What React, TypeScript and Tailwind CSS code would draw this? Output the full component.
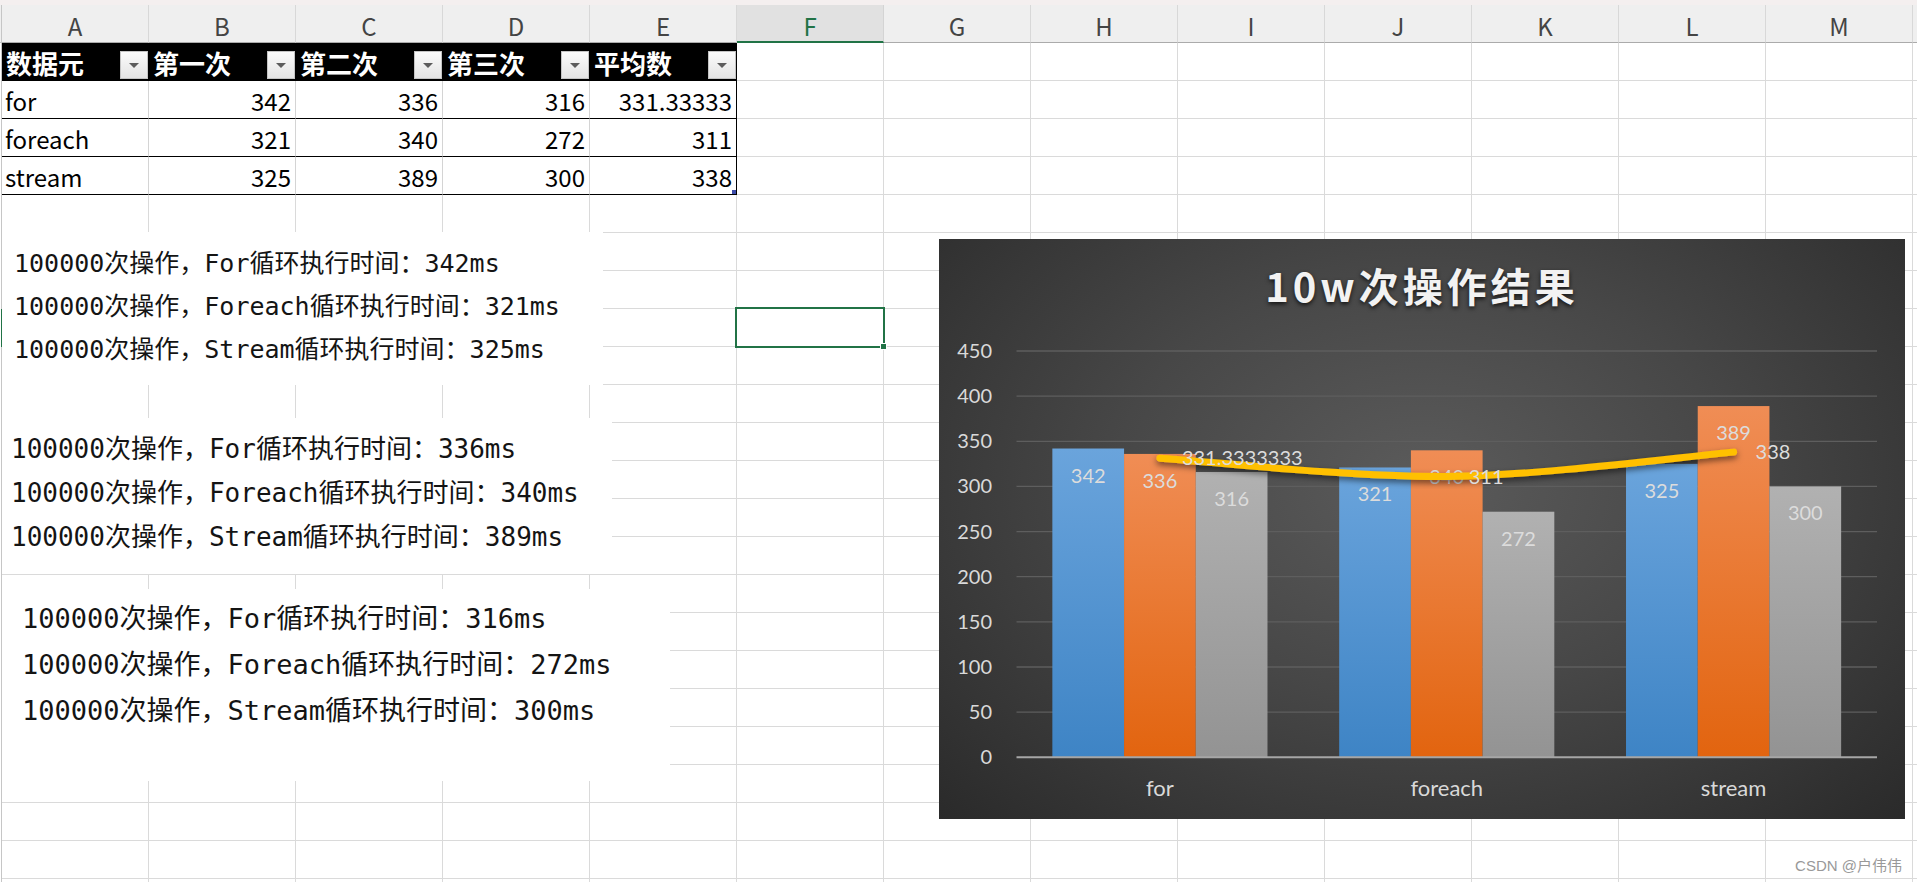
import React from "react";

const COLS = ["A", "B", "C", "D", "E", "F", "G", "H", "I", "J", "K", "L", "M"];
const ROW_COUNT = 23;
const SELECTED_COL = 5;
const SELECTED_ROW = 7;

const HEADERS = ["数据元", "第一次", "第二次", "第三次", "平均数"];
const TABLE = [
  ["for", "342", "336", "316", "331.33333"],
  ["foreach", "321", "340", "272", "311"],
  ["stream", "325", "389", "300", "338"],
];

const LOOPS = ["For", "Foreach", "Stream"];
const RUNS = [
  [342, 321, 325],
  [336, 340, 389],
  [316, 272, 300],
];

const logLine = (loop: string, ms: number) =>
  `100000次操作，${loop}循环执行时间：${ms}ms`;

function FilterButton() {
  return (
    <span className="mb-[1px] flex h-[28px] w-[28px] shrink-0 items-center justify-center self-end border border-[#c4c4c4] bg-linear-to-b from-[#fbfbfb] to-[#e4e4e4]">
      <span className="h-0 w-0 border-x-[5px] border-t-[5px] border-x-transparent border-t-[#5c5c5c]" />
    </span>
  );
}

function SheetCell({ row, col }: { row: number; col: number }) {
  const inTable = col < 5 && row < 4;

  if (inTable && row === 0) {
    return (
      <div className="flex h-full w-[147px] shrink-0 items-center justify-between border-r border-b border-black bg-black pl-[4px] text-[26px] font-bold text-white">
        <span className="pt-[3px] leading-none">{HEADERS[col]}</span>
        <FilterButton />
      </div>
    );
  }

  if (inTable) {
    const value = TABLE[row - 1][col];
    return (
      <div
        className={`relative flex h-full w-[147px] shrink-0 items-center border-b border-b-black pt-[3px] pl-[3px] pr-[4px] text-[24px] text-black ${
          col === 4 ? "border-r border-r-black" : "border-r border-r-[#d4d4d4]"
        } ${col === 0 ? "justify-start" : "justify-end"}`}
      >
        <span className="leading-none">{value}</span>
        {row === 3 && col === 4 && (
          <span className="absolute right-0 bottom-0 h-[4px] w-[4px] bg-[#3b4ba8]" />
        )}
      </div>
    );
  }

  return <div className="h-full w-[147px] shrink-0 border-r border-b border-[#dadada]" />;
}

// ---- chart ----
const CATS = ["for", "foreach", "stream"];
const SERIES = [
  { values: [342, 321, 325], fill: "url(#gBlue)" },
  { values: [336, 340, 389], fill: "url(#gOrange)" },
  { values: [316, 272, 300], fill: "url(#gGray)" },
];
const AVG = [331.3333333, 311, 338];
const AVG_LABELS = ["331.3333333", "311", "338"];

const PLOT_L = 77.5;
const PLOT_R = 938;
const Y0 = 518.3;
const K = 406.3 / 450;
const CAT_W = (PLOT_R - PLOT_L) / 3;
const BAR_W = CAT_W / 4;
const yOf = (v: number) => Y0 - v * K;
const catCenter = (i: number) => PLOT_L + CAT_W * (i + 0.5);

function smoothPath(pts: [number, number][]) {
  let d = `M${pts[0][0]},${pts[0][1]}`;
  for (let i = 0; i < pts.length - 1; i++) {
    const p0 = pts[i - 1] ?? pts[i];
    const p1 = pts[i];
    const p2 = pts[i + 1];
    const p3 = pts[i + 2] ?? p2;
    const c1x = p1[0] + (p2[0] - p0[0]) / 6;
    const c1y = p1[1] + (p2[1] - p0[1]) / 6;
    const c2x = p2[0] - (p3[0] - p1[0]) / 6;
    const c2y = p2[1] - (p3[1] - p1[1]) / 6;
    d += ` C${c1x},${c1y} ${c2x},${c2y} ${p2[0]},${p2[1]}`;
  }
  return d;
}

function Chart() {
  const linePts = AVG.map((v, i) => [catCenter(i), yOf(v)] as [number, number]);

  return (
    <div className="absolute top-[239px] left-[939px] flex h-[580px] w-[966px] flex-col bg-[radial-gradient(ellipse_at_50%_42%,#5b5b5b_0%,#474747_45%,#2a2a2a_100%)]">
      <div className="h-[96px] shrink-0 pt-[26px] text-center font-['Noto_Sans_CJK_SC',sans-serif] text-[40px] leading-none font-bold tracking-[4px] text-[#f2f2f2] [text-shadow:0_2px_4px_rgba(0,0,0,0.75)]">
        10w次操作结果
      </div>
      <svg
        width={966}
        height={484}
        viewBox="0 96 966 484"
        className="font-['Lato','Open_Sans',sans-serif]"
      >
        <defs>
          <linearGradient id="gBlue" x1="0" y1="0" x2="0" y2="1">
            <stop offset="0" stopColor="#6aa4dc" />
            <stop offset="1" stopColor="#3e84c5" />
          </linearGradient>
          <linearGradient id="gOrange" x1="0" y1="0" x2="0" y2="1">
            <stop offset="0" stopColor="#f08d55" />
            <stop offset="1" stopColor="#e2640f" />
          </linearGradient>
          <linearGradient id="gGray" x1="0" y1="0" x2="0" y2="1">
            <stop offset="0" stopColor="#b1b1b1" />
            <stop offset="1" stopColor="#939393" />
          </linearGradient>
          <filter id="lineShadow" x="-10%" y="-50%" width="120%" height="200%">
            <feDropShadow dx="0" dy="3" stdDeviation="3" floodColor="#000" floodOpacity="0.55" />
          </filter>
        </defs>

        {/* gridlines */}
        {Array.from({ length: 9 }, (_, i) => (i + 1) * 50).map((v) => (
          <line
            key={v}
            x1={PLOT_L}
            x2={PLOT_R}
            y1={yOf(v)}
            y2={yOf(v)}
            stroke="#5e5e5e"
            strokeWidth={1.3}
          />
        ))}

        {/* y axis labels */}
        {Array.from({ length: 10 }, (_, i) => i * 50).map((v) => (
          <text key={v} x={53} y={yOf(v) + 7} fontSize={20} fill="#d9d9d9" textAnchor="end">
            {v}
          </text>
        ))}

        {/* bars */}
        {SERIES.map((s, si) =>
          s.values.map((v, ci) => {
            const x = PLOT_L + ci * CAT_W + BAR_W / 2 + si * BAR_W;
            return (
              <rect key={`${si}-${ci}`} x={x} y={yOf(v)} width={BAR_W} height={Y0 - yOf(v)} fill={s.fill} />
            );
          }),
        )}

        <line x1={PLOT_L} x2={PLOT_R} y1={Y0} y2={Y0} stroke="#a6a6a6" strokeWidth={2} />

        {/* bar labels */}
        {SERIES.map((s, si) =>
          s.values.map((v, ci) => {
            const x = PLOT_L + ci * CAT_W + BAR_W / 2 + si * BAR_W + BAR_W / 2;
            return (
              <text key={`l${si}-${ci}`} x={x} y={yOf(v) + 34} fontSize={20} fill="#dcdcdc" textAnchor="middle">
                {v}
              </text>
            );
          }),
        )}

        {/* average line */}
        <path
          d={smoothPath(linePts)}
          fill="none"
          stroke="#ffc000"
          strokeWidth={7}
          strokeLinecap="round"
          filter="url(#lineShadow)"
        />
        {linePts.map(([x, y], i) => (
          <text key={`a${i}`} x={x + 22} y={y + 7} fontSize={20} fill="#dcdcdc">
            {AVG_LABELS[i]}
          </text>
        ))}

        {/* categories */}
        {CATS.map((c, i) => (
          <text key={c} x={catCenter(i)} y={557} fontSize={22} fill="#d9d9d9" textAnchor="middle">
            {c}
          </text>
        ))}
      </svg>
    </div>
  );
}

export default function App() {
  return (
    <div className="relative h-[882px] w-[1917px] overflow-hidden bg-white font-['Noto_Sans_CJK_SC',sans-serif]">
      {/* top strip */}
      <div className="h-[5px] bg-[#f4efef]" />

      {/* column headers */}
      <div className="flex h-[38px] bg-[#efefef]">
        <div className="h-full w-[2px] shrink-0 border-r border-b border-[#c6c6c6]" />
        {COLS.map((c, i) => (
          <div
            key={c}
            className={`flex h-full w-[147px] shrink-0 items-center justify-center border-r pt-[5px] text-[24px] leading-none ${
              i === SELECTED_COL
                ? "border-b-2 border-r-[#d4d4d4] border-b-[#217346] bg-[#e1e1e1] text-[#217346]"
                : "border-b border-r-[#d8d8d8] border-b-[#ababab] text-[#444]"
            }`}
          >
            {c}
          </div>
        ))}
        <div className="h-full flex-1 border-b border-[#ababab]" />
      </div>

      {/* grid */}
      {Array.from({ length: ROW_COUNT }, (_, r) => (
        <div key={r} className="flex h-[38px]">
          <div
            className={`h-full w-[2px] shrink-0 border-r ${
              r === SELECTED_ROW ? "border-r-[#217346]" : "border-r-[#c6c6c6]"
            }`}
          />
          {COLS.map((c, ci) => (
            <SheetCell key={c} row={r} col={ci} />
          ))}
          <div className="h-full flex-1 border-b border-[#dadada]" />
        </div>
      ))}

      {/* pasted console screenshots */}
      <div className="absolute top-[232px] left-[2px] h-[153px] w-[601px] bg-white pt-[10px] pl-[12px] font-['DejaVu_Sans_Mono','Noto_Sans_CJK_SC',monospace] text-[25px] text-[#141414]">
        {LOOPS.map((l, i) => (
          <div key={l} className="h-[43px] leading-[43px] whitespace-nowrap">
            {logLine(l, RUNS[0][i])}
          </div>
        ))}
      </div>
      <div className="absolute top-[418px] left-[2px] h-[156px] w-[610px] bg-white pt-[9px] pl-[9px] font-['DejaVu_Sans_Mono','Noto_Sans_CJK_SC',monospace] text-[26px] text-[#141414]">
        {LOOPS.map((l, i) => (
          <div key={l} className="h-[44px] leading-[44px] whitespace-nowrap">
            {logLine(l, RUNS[1][i])}
          </div>
        ))}
      </div>
      <div className="absolute top-[589px] left-[2px] h-[192px] w-[668px] bg-white pt-[7px] pl-[20px] font-['DejaVu_Sans_Mono','Noto_Sans_CJK_SC',monospace] text-[27px] text-[#141414]">
        {LOOPS.map((l, i) => (
          <div key={l} className="h-[46px] leading-[46px] whitespace-nowrap">
            {logLine(l, RUNS[2][i])}
          </div>
        ))}
      </div>

      {/* selected cell F8 */}
      <div className="absolute top-[307px] left-[735px] h-[41px] w-[150px] border-2 border-[#217346]">
        <span className="absolute -right-[4px] -bottom-[4px] h-[7px] w-[7px] border border-white bg-[#217346]" />
      </div>

      <Chart />

      <div className="absolute top-[856px] right-[15px] font-['Liberation_Sans','Noto_Sans_CJK_SC',sans-serif] text-[15px] leading-[20px] text-[#999]">
        CSDN @户伟伟
      </div>
    </div>
  );
}
